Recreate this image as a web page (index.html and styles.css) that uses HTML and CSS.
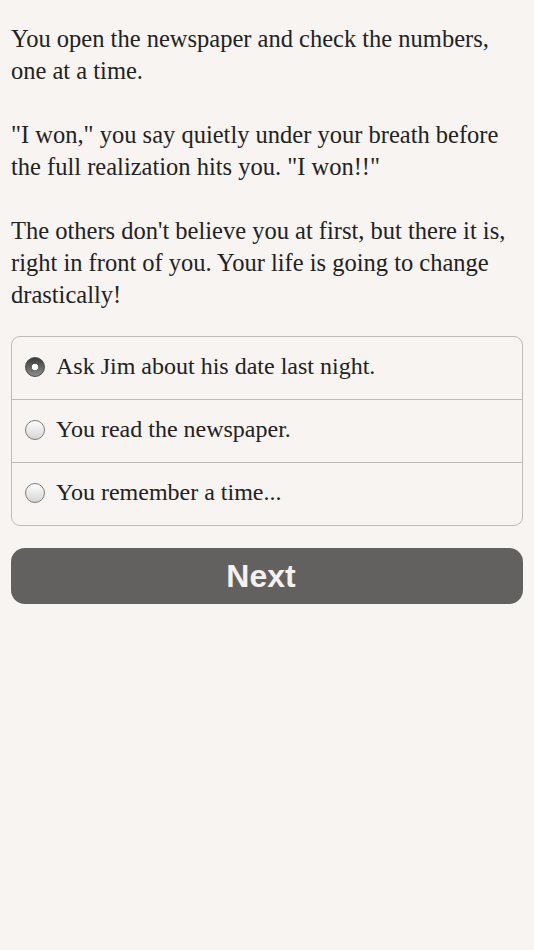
FILE: index.html
```html
<!DOCTYPE html>
<html lang="en">
<head>
<meta charset="utf-8">
<title>Story</title>
<link rel="stylesheet" href="styles.css">
</head>
<body>
<main class="page">
  <div class="story">
    <p>You open the newspaper and check the numbers, one at a time.</p>
    <p>"I won," you say quietly under your breath before the full realization hits you. "I won!!"</p>
    <p>The others don't believe you at first, but there it is, right in front of you. Your life is going to change drastically!</p>
  </div>
  <form class="choices">
    <label class="choice">
      <input type="radio" name="c" checked>
      <span class="radio"></span>
      <span class="label">Ask Jim about his date last night.</span>
    </label>
    <label class="choice">
      <input type="radio" name="c">
      <span class="radio"></span>
      <span class="label">You read the newspaper.</span>
    </label>
    <label class="choice">
      <input type="radio" name="c">
      <span class="radio"></span>
      <span class="label">You remember a time...</span>
    </label>
  </form>
  <button class="next" type="button">Next</button>
</main>
</body>
</html>
```
FILE: styles.css
```css
html, body {
  margin: 0;
  padding: 0;
  background: #f7f4f1;
}
body {
  font-family: "Liberation Serif", "Times New Roman", serif;
  color: #222;
}
.page {
  padding: 23px 11px 0 11px;
  display: flex;
  flex-direction: column;
}
.story p {
  margin: 0 0 32px 0;
  font-size: 24.5px;
  line-height: 32px;
}
.story p:last-child {
  margin-bottom: 0;
}
.choices {
  margin-top: 25px;
  border: 1px solid #bdbcba;
  border-radius: 9px;
  display: flex;
  flex-direction: column;
}
.choice {
  height: 62px;
  box-sizing: border-box;
  display: flex;
  align-items: center;
  padding: 0 0 3px 13px;
  border-top: 1px solid #bdbcba;
  font-size: 24px;
}
.choice:first-child {
  border-top: none;
  height: 62px;
}
.choice + .choice {
  height: 63px;
}
.choice input {
  display: none;
}
.radio {
  width: 18px;
  height: 18px;
  border-radius: 50%;
  border: 1px solid #7d7c7a;
  background: linear-gradient(#fdfdfd, #d6d6d6);
  margin-right: 11px;
  flex: none;
}
.choice input:checked + .radio {
  background: radial-gradient(circle at 50% 50%, #fff 0, #fff 3px, transparent 3.5px), linear-gradient(#3a3a3a, #8d8d8d);
  border-color: #4a4a4a;
}
.label {
  color: #222;
}
.next {
  margin-top: 22px;
  height: 56px;
  border: none;
  border-radius: 14px;
  background: #62615f;
  color: #f4f2ef;
  font-family: "Liberation Sans", Arial, sans-serif;
  font-weight: bold;
  font-size: 32px;
  padding: 0 12px 0 0;
}
```
